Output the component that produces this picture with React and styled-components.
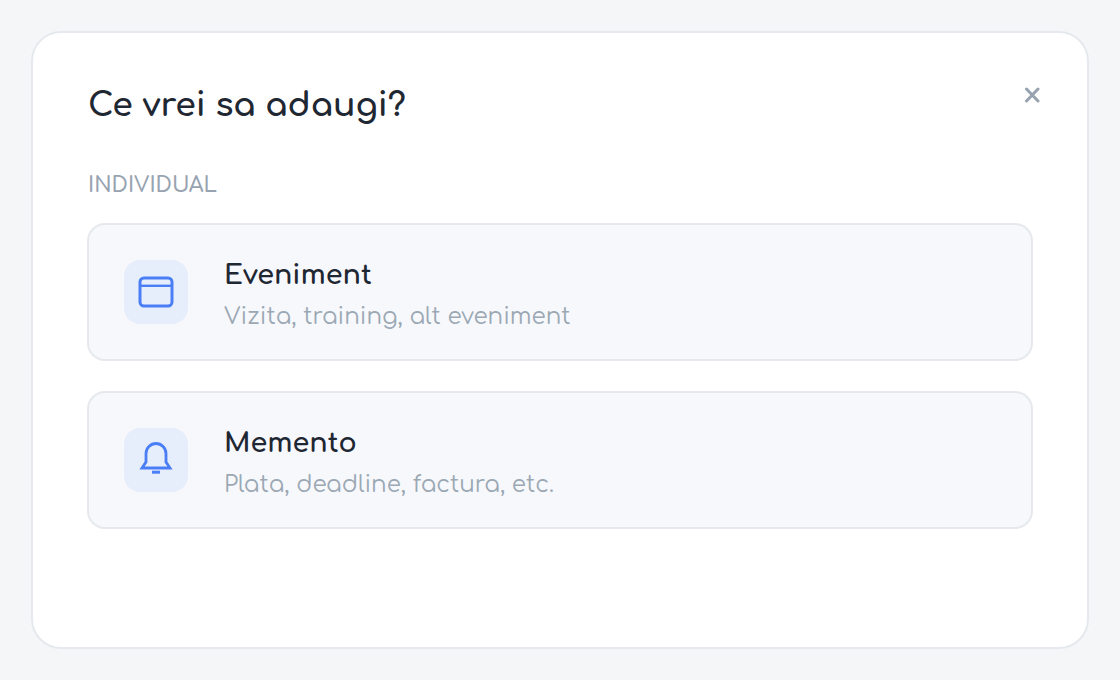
import styled, { createGlobalStyle } from 'styled-components'

const GlobalStyle = createGlobalStyle`
  *,
  *::before,
  *::after {
    box-sizing: border-box;
  }

  body {
    margin: 0;
    background: #f5f6f8;
    font-family: Comfortaa, Quicksand, Lato, sans-serif;
    color: #1e2732;
  }
`

const Page = styled.main`
  display: flex;
  min-height: 100vh;
  padding: 31px;
`

const Panel = styled.section`
  flex: 1;
  padding: 46px 54px;
  border: 2px solid #e5e9ee;
  border-radius: 30px;
  background: #fff;
`

const Header = styled.header`
  display: flex;
  align-items: flex-start;
  justify-content: space-between;
  padding-left: 1px;
`

const Title = styled.h1`
  margin: 0;
  font-size: 33px;
  font-weight: 700;
  line-height: 54px;
`

const CloseButton = styled.button`
  display: flex;
  margin-right: -15px;
  padding: 8px;
  border: 0;
  background: none;
  color: #97a3b0;
  cursor: pointer;
`

const SectionLabel = styled.h2`
  margin: 38px 0 24px;
  padding-left: 1px;
  font-size: 21px;
  font-weight: 600;
  line-height: 28px;
  color: #97a3b0;
  text-transform: uppercase;
`

const Options = styled.div`
  display: flex;
  flex-direction: column;
  gap: 30px;
`

const OptionButton = styled.button`
  display: flex;
  align-items: center;
  gap: 36px;
  width: 100%;
  padding: 28px 35px;
  border: 2px solid #e5e9ee;
  border-radius: 18px;
  background: #f7f8fc;
  font-family: inherit;
  color: inherit;
  text-align: left;
  cursor: pointer;
`

const IconTile = styled.span`
  display: flex;
  flex: none;
  border-radius: 16px;
  background: #e6eefc;
  color: #4a7ef5;
`

const OptionText = styled.span`
  display: flex;
  flex-direction: column;
  gap: 6px;
`

const OptionTitle = styled.span`
  font-size: 27px;
  font-weight: 700;
  line-height: 44px;
`

const OptionHint = styled.span`
  font-size: 23px;
  font-weight: 400;
  line-height: 28px;
  color: #9ba8b4;
`

const CloseIcon = () => (
  <svg width="16" height="16" viewBox="0 0 16 16" fill="none" aria-hidden="true">
    <path d="M2.5 2l11.5 12M14 2L2.5 14" stroke="currentColor" strokeWidth="3" strokeLinecap="round" />
  </svg>
)

const CalendarIcon = () => (
  <svg width="64" height="64" viewBox="0 0 64 64" fill="none" stroke="currentColor" aria-hidden="true">
    <rect x="16" y="18" width="32" height="28" rx="4" strokeWidth="3" />
    <path d="M16 25.8h32" strokeWidth="2.4" />
  </svg>
)

const BellIcon = () => (
  <svg width="64" height="64" viewBox="0 0 64 64" fill="none" stroke="currentColor" aria-hidden="true">
    <path d="M18 40L22 34V25.5a10 10 0 0 1 20 0V34L46 40Z" strokeWidth="2.8" />
    <path d="M28 44.2h8" strokeWidth="3" />
  </svg>
)

const OPTIONS = [
  { title: 'Eveniment', hint: 'Vizita, training, alt eveniment', Icon: CalendarIcon },
  { title: 'Memento', hint: 'Plata, deadline, factura, etc.', Icon: BellIcon },
]

const App = () => (
  <>
    <GlobalStyle />
    <Page>
      <Panel>
        <Header>
          <Title>Ce vrei sa adaugi?</Title>
          <CloseButton type="button" aria-label="Inchide">
            <CloseIcon />
          </CloseButton>
        </Header>
        <SectionLabel>Individual</SectionLabel>
        <Options>
          {OPTIONS.map(({ title, hint, Icon }) => (
            <OptionButton type="button" key={title}>
              <IconTile>
                <Icon />
              </IconTile>
              <OptionText>
                <OptionTitle>{title}</OptionTitle>
                <OptionHint>{hint}</OptionHint>
              </OptionText>
            </OptionButton>
          ))}
        </Options>
      </Panel>
    </Page>
  </>
)

export default App
